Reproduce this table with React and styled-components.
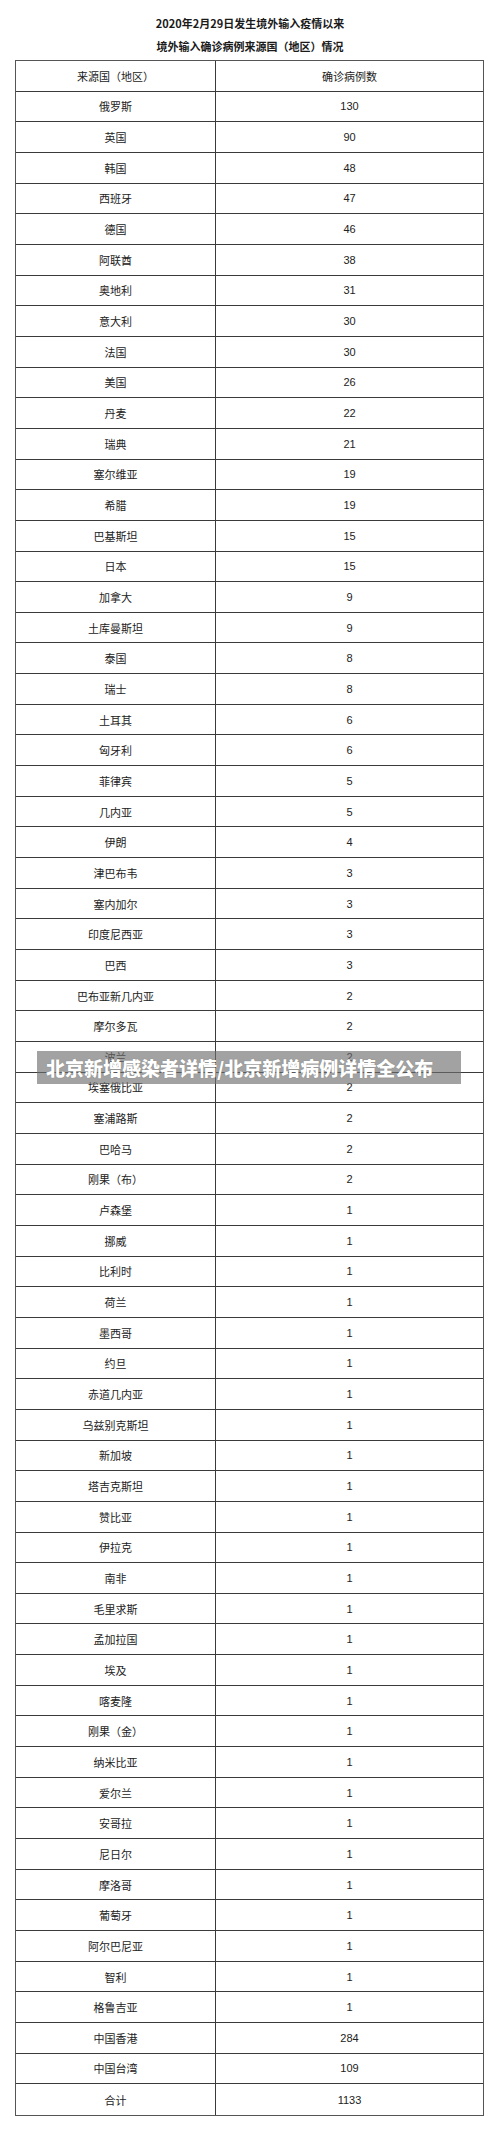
import React from "react";
import styled, { createGlobalStyle } from "styled-components";

const Global = createGlobalStyle`
  html, body { margin: 0; padding: 0; background: #fff; }
  body { font-family: "Noto Sans CJK SC", "Liberation Sans", sans-serif; color: #222; }
`;

const Page = styled.div`
  position: relative;
  width: 500px;
  height: 2136px;
  background: #fff;
  padding-top: 12px;
  box-sizing: border-box;
`;

const Title = styled.div`
  text-align: center;
  font-size: 11px;
  font-weight: 700;
  line-height: 22px;
  color: #1a1a1a;
`;

const Titles = styled.div`
  display: flex;
  flex-direction: column;
  gap: 1px;
  margin-bottom: 3px;
`;

const Table = styled.div`
  margin-left: 15px;
  width: 469px;
  box-sizing: border-box;
  border: 1px solid #555;
  display: grid;
  grid-template-columns: 200px 1fr;
  grid-auto-rows: 30.66px;
`;

const Cell = styled.div`
  display: flex;
  align-items: center;
  justify-content: center;
  font-size: 11px;
  color: #222;
  border-bottom: ${(p) => (p.$last ? "none" : "1px solid #3a3a3a")};
  border-right: ${(p) => (p.$left ? "1px solid #3a3a3a" : "none")};
  box-sizing: border-box;
  font-family: ${(p) => (p.$num ? '"Liberation Sans", Arial, sans-serif' : '"Noto Sans CJK SC", sans-serif')};
`;

const Banner = styled.div`
  position: absolute;
  left: 37px;
  top: 1051px;
  width: 424px;
  height: 33px;
  background: rgba(110, 110, 110, 0.64);
  display: flex;
  align-items: center;
  padding-left: 9px;
  box-sizing: border-box;
  color: #fff;
  font-size: 19px;
  font-weight: 900;
  font-family: "Noto Sans CJK SC", sans-serif;
  text-shadow: 0 0 1px rgba(0, 0, 0, 0.3);
  white-space: nowrap;
`;

const rows = [
  ["俄罗斯", "130"], ["英国", "90"], ["韩国", "48"], ["西班牙", "47"], ["德国", "46"],
  ["阿联酋", "38"], ["奥地利", "31"], ["意大利", "30"], ["法国", "30"], ["美国", "26"],
  ["丹麦", "22"], ["瑞典", "21"], ["塞尔维亚", "19"], ["希腊", "19"], ["巴基斯坦", "15"],
  ["日本", "15"], ["加拿大", "9"], ["土库曼斯坦", "9"], ["泰国", "8"], ["瑞士", "8"],
  ["土耳其", "6"], ["匈牙利", "6"], ["菲律宾", "5"], ["几内亚", "5"], ["伊朗", "4"],
  ["津巴布韦", "3"], ["塞内加尔", "3"], ["印度尼西亚", "3"], ["巴西", "3"], ["巴布亚新几内亚", "2"],
  ["摩尔多瓦", "2"], ["波兰", "2"], ["埃塞俄比亚", "2"], ["塞浦路斯", "2"], ["巴哈马", "2"],
  ["刚果（布）", "2"], ["卢森堡", "1"], ["挪威", "1"], ["比利时", "1"], ["荷兰", "1"],
  ["墨西哥", "1"], ["约旦", "1"], ["赤道几内亚", "1"], ["乌兹别克斯坦", "1"], ["新加坡", "1"],
  ["塔吉克斯坦", "1"], ["赞比亚", "1"], ["伊拉克", "1"], ["南非", "1"], ["毛里求斯", "1"],
  ["孟加拉国", "1"], ["埃及", "1"], ["喀麦隆", "1"], ["刚果（金）", "1"], ["纳米比亚", "1"],
  ["爱尔兰", "1"], ["安哥拉", "1"], ["尼日尔", "1"], ["摩洛哥", "1"], ["葡萄牙", "1"],
  ["阿尔巴尼亚", "1"], ["智利", "1"], ["格鲁吉亚", "1"], ["中国香港", "284"], ["中国台湾", "109"],
  ["合计", "1133"],
];

export default function App() {
  const all = [["来源国（地区）", "确诊病例数", true], ...rows];
  return (
    <Page>
      <Global />
      <Titles>
        <Title>2020年2月29日发生境外输入疫情以来</Title>
        <Title>境外输入确诊病例来源国（地区）情况</Title>
      </Titles>
      <Table>
        {all.map(([name, n, head], i) => {
          const last = i === all.length - 1;
          return (
            <React.Fragment key={i}>
              <Cell $left $last={last}>{name}</Cell>
              <Cell $last={last} $num={!head}>{n}</Cell>
            </React.Fragment>
          );
        })}
      </Table>
      <Banner>北京新增感染者详情/北京新增病例详情全公布</Banner>
    </Page>
  );
}
